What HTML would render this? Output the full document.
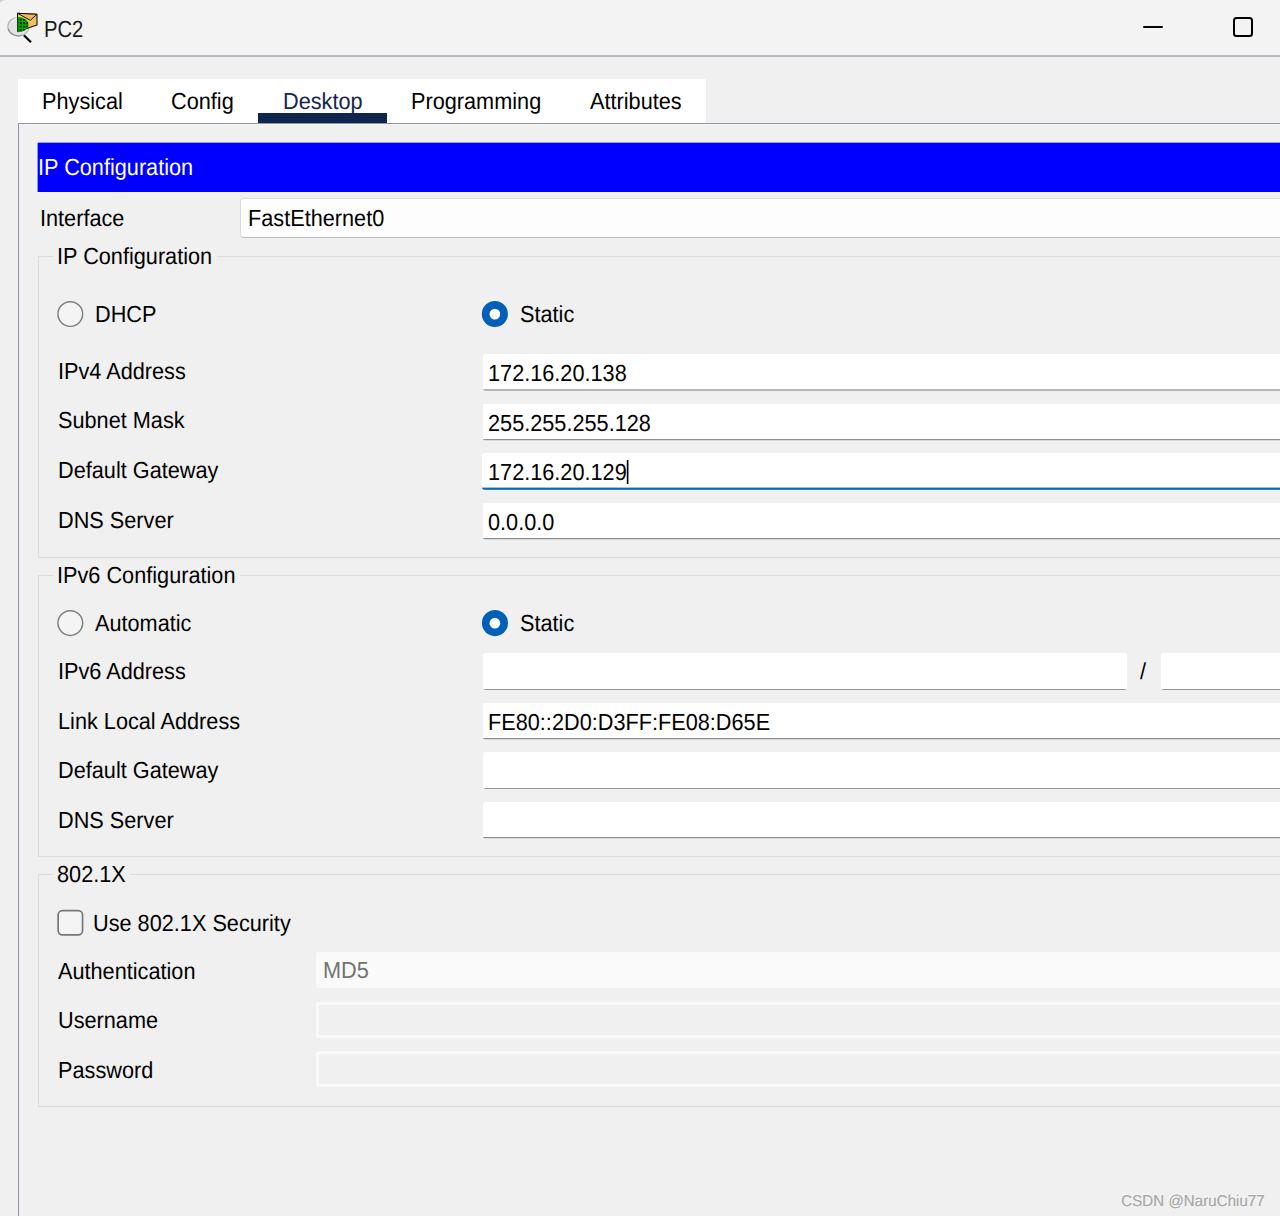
<!DOCTYPE html>
<html><head><meta charset="utf-8"><title>PC2</title>
<style>
*{box-sizing:border-box;margin:0;padding:0}
html,body{width:1280px;height:1216px;overflow:hidden;background:#f0f0f0}
body{position:relative;font-family:"Liberation Sans",sans-serif;font-size:23.25px;color:#000}
.abs{position:absolute}
.t{position:absolute;margin-top:-1px;margin-left:-.5px;white-space:nowrap;line-height:26px;height:26px;text-rendering:geometricPrecision;transform:scaleX(.933);transform-origin:0 0}
.titlebar{left:0;top:0;width:1280px;height:55px;background:#f3f3f3}
.titleline{left:0;top:55px;width:1280px;height:2px;background:#b9bac2}
.tabs{left:18px;top:79px;width:688px;height:44px;background:#fff}
.ptop{left:18px;top:123px;width:1262px;height:1px;background:#8f93a1}
.pleft{left:18px;top:123px;width:1px;height:1093px;background:#8f93a1}
.ul{left:258px;top:113px;width:129px;height:10px;background:#0e264d}
.hdr{left:38px;top:143px;width:1242px;height:49px;background:#0000ff;box-shadow:-1px 0 0 rgba(0,0,255,.4),0 -1px 0 rgba(0,0,255,.35)}
.combo{left:240px;top:198px;width:1060px;height:40px;background:#fdfdfd;border:1px solid #dadada;border-bottom-color:#bcbcbc;border-radius:4px}
.grp{position:absolute;left:38px;width:1260px;border:1px solid #dcdcdc}
.leg{position:absolute;background:#f0f0f0;height:4px}
.inp{position:absolute;left:483px;width:820px;height:37px;border-radius:2px 0 0 3px;background:linear-gradient(#fff 0,#fff 35px,#8e8e8e 35px,#8e8e8e 36px,#d8d8d8 36px,#d8d8d8 37px)}
.inp.w36{background:linear-gradient(#fff 0,#fff 36px,#929292 36px,#929292 37px)}
.inp.b2{background:linear-gradient(#fff 0,#fff 35px,#b7b7b7 35px,#b7b7b7 37px)}
.inp.f{left:482px;height:37px;background:linear-gradient(#fff 0,#fff 34px,#99c2e6 34px,#99c2e6 35px,#0067c0 35px,#0067c0 36px,#2f81ca 36px,#2f81ca 37px)}
.radio{position:absolute;width:26px;height:26px;border-radius:50%;border:1.5px solid #8a8a8a;background:#f4f4f4}
.radio.on{border:8px solid #0060b9;background:#fff}
.chk{position:absolute;width:26px;height:25px;border-radius:5px;border:1.5px solid #8a8a8a;background:#f5f5f5}
.dis{position:absolute;left:316px;width:990px;height:36px;background:#f0f0f0;border:3px solid #fafafa;border-radius:3px}
</style></head><body>
<div class="abs titlebar"></div>
<div class="abs titleline"></div>
<svg class="abs" style="left:0;top:0" width="50" height="56" viewBox="0 0 50 56">
<defs><pattern id="gd" x="19.7" y="18.8" width="3.35" height="3.4" patternUnits="userSpaceOnUse"><rect x="0" y="0" width="1.9" height="1.9" fill="#031c03"/></pattern>
<linearGradient id="env" x1="0" y1="0" x2="1" y2="1"><stop offset="0" stop-color="#f7d466"/><stop offset="1" stop-color="#e9b856"/></linearGradient>
<clipPath id="lc"><ellipse cx="17.8" cy="24.6" rx="10.7" ry="7.7"/></clipPath></defs>
<path d="M0 3 Q0.8 0.6 6.5 0 L0 0 Z" fill="#cfcfcf"/><ellipse cx="18.4" cy="26.6" rx="10.6" ry="9.3" fill="#e5e4e2" stroke="#b4b4b4" stroke-width="1.1"/>
<path d="M8.2 29 A10.6 9.3 0 0 0 22 35.3" fill="none" stroke="#8e8e8e" stroke-width="1.1"/><path d="M12 22 A8 8 0 0 1 17 18" fill="none" stroke="#f6f6f6" stroke-width="1"/>
<path d="M23.9 35.3 L31 42.3" stroke="#0a0a0a" stroke-width="2.3" stroke-linecap="butt"/>
<path d="M17.5 13.3 L37 14.3 L37 24.9 L17.8 31.6 Z" fill="url(#env)" stroke="#1a1406" stroke-width="1.1" stroke-linejoin="round"/>
<path d="M17.5 13.3 L30.3 20.3 L37 14.3 Z" fill="#ecbb5c" stroke="#1a1406" stroke-width="1" stroke-linejoin="round"/>
<g clip-path="url(#lc)"><rect x="17.9" y="15" width="12" height="18" fill="#02ac02"/><rect x="17.9" y="15" width="12" height="18" fill="url(#gd)"/></g>
<path d="M17.7 16.9 V32" stroke="#0a3a0a" stroke-width="0.6"/>
</svg>
<div class="t" style="left:44px;top:16.5px;font-size:23.4px;transform:scaleX(.865);color:#1a1a1a">PC2</div>
<div class="abs" style="left:1143px;top:25.5px;width:20px;height:2px;background:#000;border-radius:1px"></div>
<div class="abs" style="left:1233px;top:17px;width:20px;height:20px;border:2px solid #000;border-radius:3.5px"></div>

<div class="abs tabs"></div>
<div class="abs ptop"></div><div class="abs" style="left:19px;top:124px;width:1261px;height:1px;background:#f8f8f8"></div><div class="abs pleft"></div>
<div class="abs ul"></div>
<div class="t" style="left:42px;top:89px">Physical</div>
<div class="t" style="left:171px;top:89px">Config</div>
<div class="t" style="left:283px;top:89px;color:#15264d">Desktop</div>
<div class="t" style="left:411px;top:89px">Programming</div>
<div class="t" style="left:590px;top:89px">Attributes</div>

<div class="abs hdr"></div>
<div class="t" style="left:38px;top:155px;color:#fff">IP Configuration</div>
<div class="t" style="left:40px;top:206px">Interface</div>
<div class="abs combo"></div>
<div class="t" style="left:248px;top:206px">FastEthernet0</div>

<svg class="abs" style="left:0;top:0" width="1280" height="1216" viewBox="0 0 1280 1216">
<circle cx="70.3" cy="314" r="12.35" fill="#f4f4f4" stroke="#7e7e7e" stroke-width="1.45"/>
<circle cx="70.3" cy="623.05" r="12.35" fill="#f4f4f4" stroke="#7e7e7e" stroke-width="1.45"/>
<circle cx="494.85" cy="314" r="13.05" fill="#005fb8"/><circle cx="494.85" cy="314.1" r="5.35" fill="#fff"/>
<circle cx="494.95" cy="623.1" r="13.05" fill="#005fb8"/><circle cx="494.85" cy="623.2" r="5.35" fill="#fff"/>
<rect x="58.15" y="910.55" width="24.4" height="24.3" rx="4.3" fill="#f4f4f4" stroke="#787878" stroke-width="1.7"/>
</svg>
<!-- group 1 -->
<div class="grp" style="top:256px;height:302px"></div>
<div class="leg" style="left:53px;top:254px;width:164px"></div>
<div class="t" style="left:57px;top:244px">IP Configuration</div>
<div class="t" style="left:95px;top:302px">DHCP</div>
<div class="t" style="left:520px;top:302px">Static</div>
<div class="t" style="left:58px;top:359px">IPv4 Address</div>
<div class="t" style="left:58px;top:408px">Subnet Mask</div>
<div class="t" style="left:58px;top:458px">Default Gateway</div>
<div class="t" style="left:58px;top:507.5px">DNS Server</div>
<div class="inp b2" style="top:354px"></div><div class="t" style="left:488px;top:361px">172.16.20.138</div>
<div class="inp" style="top:404px"></div><div class="t" style="left:488px;top:410.5px">255.255.255.128</div>
<div class="inp f" style="top:453px"></div><div class="t" style="left:488px;top:460px">172.16.20.129</div>
<div class="abs" style="left:627px;top:460px;width:1px;height:24px;background:#000;box-shadow:1px 0 0 rgba(0,0,0,.45),-1px 0 0 rgba(0,0,0,.2)"></div>
<div class="inp" style="top:503px"></div><div class="t" style="left:488px;top:509.5px">0.0.0.0</div>

<!-- group 2 -->
<div class="grp" style="top:575px;height:282px"></div>
<div class="leg" style="left:53px;top:573px;width:187px"></div>
<div class="t" style="left:57px;top:563px">IPv6 Configuration</div>
<div class="t" style="left:95px;top:611px">Automatic</div>
<div class="t" style="left:520px;top:611px">Static</div>
<div class="t" style="left:58px;top:659px">IPv6 Address</div>
<div class="t" style="left:58px;top:708.5px">Link Local Address</div>
<div class="t" style="left:58px;top:758px">Default Gateway</div>
<div class="t" style="left:58px;top:807.5px">DNS Server</div>
<div class="inp w36" style="top:653px;width:644px;border-radius:2px 2px 3px 3px"></div>
<div class="t" style="left:1140px;top:659px">/</div>
<div class="inp w36" style="top:653px;left:1161px;width:140px"></div>
<div class="inp" style="top:703px"></div><div class="t" style="left:488px;top:710px">FE80::2D0:D3FF:FE08:D65E</div>
<div class="inp w36" style="top:752px"></div>
<div class="inp" style="top:802px"></div>

<!-- group 3 -->
<div class="grp" style="top:874px;height:233px"></div>
<div class="leg" style="left:53px;top:872px;width:77px"></div>
<div class="t" style="left:57px;top:862px">802.1X</div>
<div class="t" style="left:93px;top:911px">Use 802.1X Security</div>
<div class="t" style="left:58px;top:958.5px">Authentication</div>
<div class="t" style="left:58px;top:1008px">Username</div>
<div class="t" style="left:58px;top:1057.5px">Password</div>
<div class="abs" style="left:316px;top:952px;width:990px;height:36px;background:#fafafa;border-radius:3px"></div>
<div class="t" style="left:323px;top:958px;color:#737373">MD5</div>
<div class="dis" style="top:1002px"></div>
<div class="dis" style="top:1051px"></div>

<div class="t" style="left:1121px;top:1192.5px;font-size:15.85px;line-height:20px;height:20px;transform:scaleX(.957);color:#a8a8a8;text-shadow:-.7px -.7px 0 rgba(255,255,255,.9),.3px .3px 0 rgba(150,150,150,.6)">CSDN @NaruChiu77</div>
</body></html>
